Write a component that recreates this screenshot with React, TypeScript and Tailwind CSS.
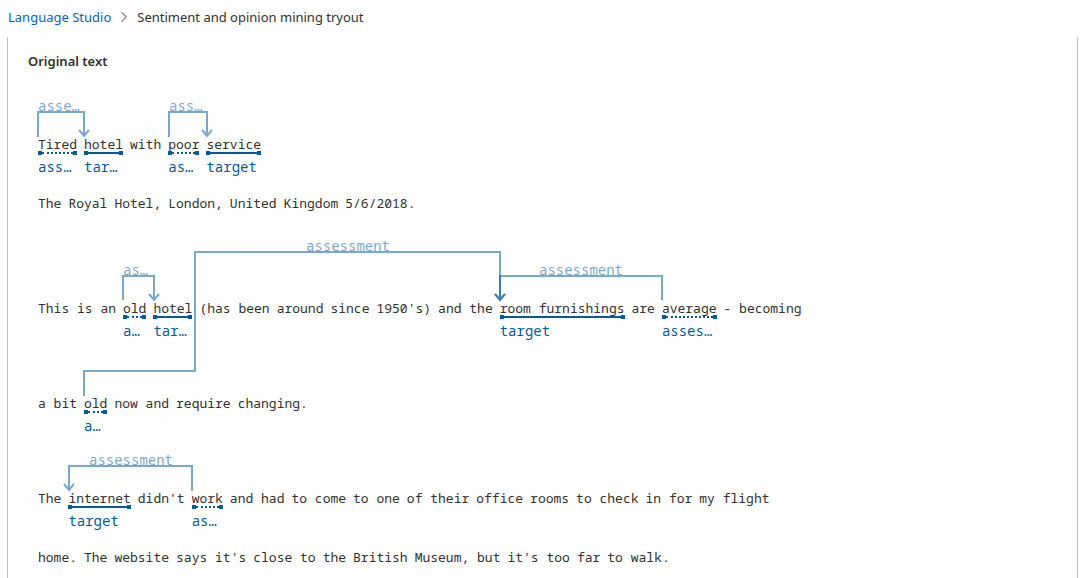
import { ChevronRight } from "lucide-react";

type Kind = "target" | "assessment";

interface Token {
  text: string;
  kind?: Kind;
  label?: string;
}

interface Line {
  space: string;
  tokens: Token[];
}

const words = (...parts: string[]): Token[] => parts.map((text) => ({ text }));
const target = (text: string, label = "target"): Token => ({ text, kind: "target", label });
const assessment = (text: string, label: string): Token => ({ text, kind: "assessment", label });

const lines: Line[] = [
  {
    space: "pt-[54px]",
    tokens: [
      assessment("Tired", "ass…"),
      target("hotel", "tar…"),
      ...words("with"),
      assessment("poor", "as…"),
      target("service"),
    ],
  },
  {
    space: "pt-0",
    tokens: words("The", "Royal", "Hotel,", "London,", "United", "Kingdom", "5/6/2018."),
  },
  {
    space: "pt-[69px]",
    tokens: [
      ...words("This is an"),
      assessment("old", "a…"),
      target("hotel", "tar…"),
      ...words("(has been", "around", "since", "1950's)", "and the"),
      target("room furnishings"),
      ...words("are"),
      assessment("average", "asses…"),
      ...words("- becoming"),
    ],
  },
  {
    space: "pt-9",
    tokens: [
      ...words("a bit"),
      assessment("old", "a…"),
      ...words("now and", "require", "changing."),
    ],
  },
  {
    space: "pt-9",
    tokens: [
      ...words("The"),
      target("internet"),
      ...words("didn't"),
      assessment("work", "as…"),
      ...words("and had", "to come", "to one", "of their", "office", "rooms", "to check", "in for", "my flight"),
    ],
  },
  {
    space: "pt-0",
    tokens: words(
      "home.", "The", "website", "says it's", "close to", "the", "British", "Museum, but", "it's too", "far", "to walk.",
    ),
  },
];

interface Arc {
  path: string;
  tip: [number, number];
  label: string;
  at: [number, number];
}

const arcs: Arc[] = [
  { path: "M0 55V30H46V53", tip: [46, 54], label: "asse…", at: [0, 29] },
  { path: "M131 55V30H169V53", tip: [169, 54], label: "ass…", at: [131, 29] },
  { path: "M85 218V194H116V217", tip: [116, 218], label: "as…", at: [85, 193] },
  { path: "M46 314V289H157V170H462V217", tip: [462, 218], label: "assessment", at: [268, 169] },
  { path: "M624 218V194H462V217", tip: [462, 218], label: "assessment", at: [501, 193] },
  { path: "M154 409V384H31V407", tip: [31, 408], label: "assessment", at: [51, 383] },
];

function Word({ text, kind, label }: Token) {
  if (!kind) return <span>{text}</span>;
  return (
    <span className="flex flex-col">
      <span>{text}</span>
      <span className="-mt-[2px] flex h-1 items-center text-[#005a9e]">
        <span className="size-1 bg-current" />
        <span
          className={
            kind === "target"
              ? "flex-1 border-t-2 border-solid border-current"
              : "flex-1 border-t-2 border-dotted border-current"
          }
        />
        <span className="size-1 bg-current" />
      </span>
      <span className="mt-[3px] text-[14px] text-[#005a9e]">{label}</span>
    </span>
  );
}

function Arcs() {
  return (
    <svg className="pointer-events-none absolute top-px left-0 h-full w-full overflow-visible">
      {arcs.map(({ path, tip: [x, y], label, at }) => (
        <g key={path} opacity="0.52">
          <path
            d={`${path}M${x - 5} ${y - 6}L${x} ${y}L${x + 5} ${y - 6}`}
            fill="none"
            stroke="#005a9e"
            strokeWidth="2"
          />
          <text x={at[0]} y={at[1]} fill="#005a9e" className="text-[14px]">
            {label}
          </text>
        </g>
      ))}
    </svg>
  );
}

export default function App() {
  return (
    <div className="flex min-h-screen flex-col bg-white font-['Noto_Sans','Open_Sans',sans-serif] text-[#323130]">
      <nav aria-label="Breadcrumb" className="flex h-[37px] items-center gap-1 px-2 pb-1 text-[13px] leading-5">
        <a href="#" className="text-[#0067b8]">
          Language Studio
        </a>
        <ChevronRight className="size-[18px] text-[#8a8886]" strokeWidth={1.5} />
        <span>Sentiment and opinion mining tryout</span>
      </nav>
      <main className="mr-[11px] ml-[7px] flex-1 border-x border-[#bdbdbd] px-5 pt-[14px]">
        <h1 className="text-[13px] leading-5 font-semibold">Original text</h1>
        <section className="relative mt-[10px] ml-[10px] flex flex-col gap-[18px] font-['Noto_Sans_Mono','DejaVu_Sans_Mono',monospace] text-[13px] leading-[18px] whitespace-nowrap">
          {lines.map(({ space, tokens }, i) => (
            <p key={i} className={`flex items-start gap-[7px] ${space}`}>
              {tokens.map((token, j) => (
                <Word key={j} {...token} />
              ))}
            </p>
          ))}
          <Arcs />
        </section>
      </main>
    </div>
  );
}
